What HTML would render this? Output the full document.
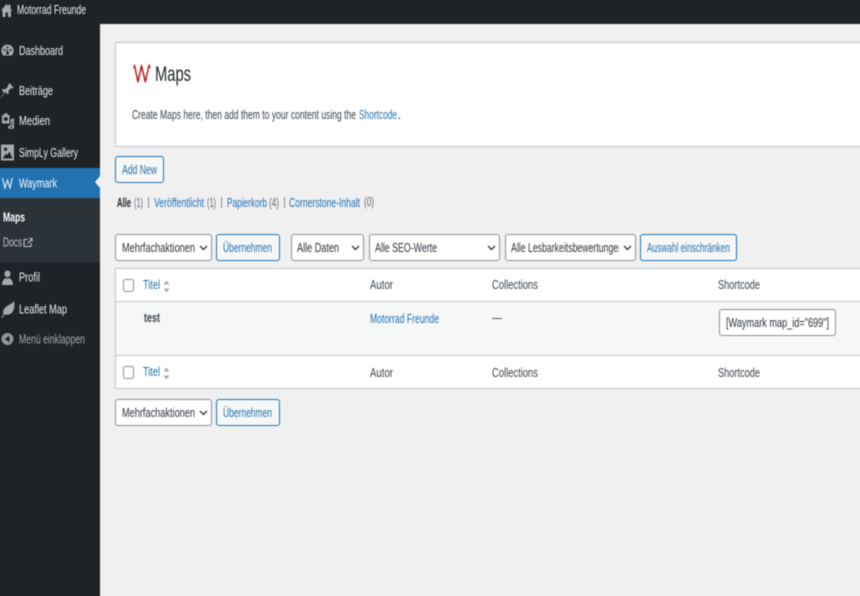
<!DOCTYPE html>
<html><head><meta charset="utf-8"><style>
html,body{margin:0;padding:0;width:860px;height:596px;overflow:hidden;background:#f0f0f1}
#w{position:absolute;left:0;top:0;width:860px;height:596px;overflow:hidden;contain:paint}
svg.r{position:absolute;left:-10px;top:-10px;display:block;filter:blur(.4px)}
text{font-family:"Liberation Sans",sans-serif;font-size:13px;fill:#3c434a}
.l{fill:#2271b1}
.g{fill:#646970}
.b{fill:#2271b1;font-size:12.5px}
.box{fill:#fff;stroke:#8c8f94}
.btn{fill:#f6f7f7;stroke:#2271b1}
.ck{fill:#fff;stroke:#8c8f94}
</style></head><body><div id="w">
<svg class="r" width="880" height="616" viewBox="-10 -10 880 616" xmlns="http://www.w3.org/2000/svg">
<rect x="-10" y="-10" width="880" height="616" fill="#f0f0f1"/>
<rect x="-10" y="-10" width="880" height="34" fill="#1d2327"/>
<rect x="-10" y="-10" width="110" height="616" fill="#1d2327"/>
<rect x="-10" y="168" width="110" height="30" fill="#2271b1"/>
<rect x="-10" y="198" width="110" height="64" fill="#2c3338"/>
<path d="M100 176l-5 6 5 6z" fill="#f0f0f1"/>

<!-- sidebar icons -->
<g fill="#a7aaad">
<path d="M1 10.500L6.500 4l2 2.200V4.500h2V8.500L12.500 10.500H11V17H8v-4.500H5.500V17H2.500v-6.500z"/>
<path fill-rule="evenodd" d="M7.500 44.500a6.200 6.200 0 0 1 5.500 9l-1 2H3l-1-2a6.200 6.200 0 0 1 5.500-9zm0 2a1 1 0 1 0 .1 0zM4.500 49a1 1 0 1 0 .1 0zm6 0a1 1 0 1 0 .1 0zM6.300 54.500h2.400l.3-1-1.200-4h-.6l-1.200 4z"/>
<path d="M9.500 83l4 4.500-1.500 1-1-.3-2.500 2.700.2 2.400-1.200 1-2.300-2.300L1 98l-.3-.3L4 92.500l-2.200-2.300 1.200-1.200 2.400.2L8 86.500l-.2-1z"/>
<path fill-rule="evenodd" d="M2 115h2l.8-1.800h2.400L8 115h1.500v8.500H2zm3.800 2a2 2 0 1 0 .1 0zM10.500 119.500l3.500-1.300v9a1.800 1.800 0 1 1-1.500-1.700v-4.500l-.8.300v5.900a1.800 1.800 0 1 1-1.200-1.700z"/>
<path fill-rule="evenodd" d="M1 144.500h13v16H1zm4.500 3a1.700 1.700 0 1 0 .1 0zM2.800 158.500h9.500l-2.800-7-2.200 3.500-1.500-1.500z"/>
<path d="M4.500 273.500a3 3 0 0 1 6 0c0 2.200-1.300 3.800-3 3.800s-3-1.600-3-3.800zM2 285c0-4 2.200-6.500 4-7l1.500 1 1.500-1c1.800.5 4 3 4 7z"/>
<path d="M14 301c1 5 .3 10-3 12.500-2.300 1.500-5 1.500-6.700 1L2.500 318l-1-.7 2-3.300c-1-2.500.2-5.500 3-7.500 2.300-1.600 5.500-2.500 7.500-5.500z"/>
<path fill-rule="evenodd" d="M7.500 333a6 6 0 1 1-.1 0zm2 2.700L4.800 339l4.700 3.300z" opacity=".85"/>
</g>
<path d="M2.500 178l2.500 10 2.500-8 2.500 8 2.300-10" fill="none" stroke="#e8f0f6" stroke-width="1.100"/>

<!-- sidebar text -->
<text x="17" y="14" textLength="69" lengthAdjust="spacingAndGlyphs" style="fill:#f0f0f1">Motorrad Freunde</text>
<text x="19" y="55" textLength="44" lengthAdjust="spacingAndGlyphs" style="fill:#f0f0f1">Dashboard</text>
<text x="19" y="95" textLength="34" lengthAdjust="spacingAndGlyphs" style="fill:#f0f0f1">Beiträge</text>
<text x="19" y="125" textLength="31" lengthAdjust="spacingAndGlyphs" style="fill:#f0f0f1">Medien</text>
<text x="19" y="157" textLength="59" lengthAdjust="spacingAndGlyphs" style="fill:#f0f0f1">SimpLy Gallery</text>
<text x="19" y="187.500" textLength="38" lengthAdjust="spacingAndGlyphs" style="fill:#fff">Waymark</text>
<text x="3" y="221.500" textLength="22" lengthAdjust="spacingAndGlyphs" style="fill:#fff;font-weight:bold">Maps</text>
<text x="3" y="246.500" textLength="19" lengthAdjust="spacingAndGlyphs" style="fill:#c3c4c7">Docs</text>
<text x="19" y="281.500" textLength="21" lengthAdjust="spacingAndGlyphs" style="fill:#f0f0f1">Profil</text>
<text x="19" y="313.500" textLength="48" lengthAdjust="spacingAndGlyphs" style="fill:#f0f0f1">Leaflet Map</text>
<text x="19" y="343.500" textLength="66" lengthAdjust="spacingAndGlyphs" style="fill:#a7aaad">Menü einklappen</text>
<path d="M27.500 239.500h-3.500v7h7V243M27.500 243.500l4-4M29 238.500h3v3" fill="none" stroke="#c3c4c7" stroke-width="1.100"/>

<!-- header card -->
<rect x="115.500" y="42.500" width="760" height="104" fill="#fff" stroke="#c3c4c7"/>
<path d="M134.500 66l3.500 15 3.500-14.500L145.300 81l3.700-15" fill="none" stroke="#b3201c" stroke-width="1.500"/>
<path d="M133 68l1.500-4.500 1.500 4.500zM139.800 68.500l1.700-4.500 1.700 4.500zM147.500 68l1.800-4.500 1.500 4.500zM136.300 79l1.700 4.500 1.700-4.500zM143.500 79l1.800 4.500 1.700-4.500z" fill="#b3201c"/>
<text x="155" y="81" textLength="36" lengthAdjust="spacingAndGlyphs" style="font-size:21px;fill:#1d2327">Maps</text>
<text x="132" y="119" textLength="224" lengthAdjust="spacingAndGlyphs">Create Maps here, then add them to your content using the</text>
<text class="l" x="359" y="119" textLength="38" lengthAdjust="spacingAndGlyphs">Shortcode</text>
<text x="397.500" y="119">.</text>

<!-- add new -->
<rect class="btn" x="115.500" y="156.500" width="48" height="26" rx="2.500"/>
<text class="b" x="122" y="174" textLength="35" lengthAdjust="spacingAndGlyphs">Add New</text>

<!-- subsubsub -->
<text x="117" y="207" textLength="14" lengthAdjust="spacingAndGlyphs" style="font-weight:bold;fill:#1d2327">Alle</text>
<text class="g" x="134" y="207" textLength="9" lengthAdjust="spacingAndGlyphs">(1)</text>
<rect x="148" y="197" width="1" height="11" fill="#8c8f94"/>
<text class="l" x="154" y="207" textLength="50" lengthAdjust="spacingAndGlyphs">Veröffentlicht</text>
<text class="g" x="207" y="207" textLength="9" lengthAdjust="spacingAndGlyphs">(1)</text>
<rect x="221" y="197" width="1" height="11" fill="#8c8f94"/>
<text class="l" x="227" y="207" textLength="40" lengthAdjust="spacingAndGlyphs">Papierkorb</text>
<text class="g" x="269" y="207" textLength="10" lengthAdjust="spacingAndGlyphs">(4)</text>
<rect x="284" y="197" width="1" height="11" fill="#8c8f94"/>
<text class="l" x="289" y="207" textLength="71" lengthAdjust="spacingAndGlyphs">Cornerstone-Inhalt</text>
<text class="g" x="364" y="206" textLength="10" lengthAdjust="spacingAndGlyphs">(0)</text>

<!-- top filters -->
<rect class="box" x="115.500" y="234.500" width="96" height="26" rx="2.500"/>
<text x="122" y="252" textLength="73" lengthAdjust="spacingAndGlyphs" style="fill:#2c3338">Mehrfachaktionen</text>
<path d="M200 246l3.500 3.500 3.500-3.500" fill="none" stroke="#2c3338" stroke-width="1.300"/>
<rect class="btn" x="216.500" y="234.500" width="63" height="26" rx="2.500"/>
<text class="b" x="223" y="252" textLength="49" lengthAdjust="spacingAndGlyphs">Übernehmen</text>
<rect class="box" x="291.500" y="234.500" width="72" height="26" rx="2.500"/>
<text x="297" y="252" textLength="42" lengthAdjust="spacingAndGlyphs" style="fill:#2c3338">Alle Daten</text>
<path d="M352 246l3.500 3.500 3.500-3.500" fill="none" stroke="#2c3338" stroke-width="1.300"/>
<rect class="box" x="369.500" y="234.500" width="130" height="26" rx="2.500"/>
<text x="375" y="252" textLength="62" lengthAdjust="spacingAndGlyphs" style="fill:#2c3338">Alle SEO-Werte</text>
<path d="M488 246l3.500 3.500 3.500-3.500" fill="none" stroke="#2c3338" stroke-width="1.300"/>
<rect class="box" x="505.500" y="234.500" width="130" height="26" rx="2.500"/>
<svg x="511" y="238" width="108" height="20"><text x="0" y="14" textLength="112" lengthAdjust="spacingAndGlyphs" style="fill:#2c3338">Alle Lesbarkeitsbewertungen</text></svg>
<path d="M624 246l3.500 3.500 3.500-3.500" fill="none" stroke="#2c3338" stroke-width="1.300"/>
<rect class="btn" x="640.500" y="234.500" width="96" height="26" rx="2.500"/>
<text class="b" x="647" y="252" textLength="83" lengthAdjust="spacingAndGlyphs">Auswahl einschränken</text>

<!-- table -->
<rect x="115.500" y="268.500" width="760" height="120" fill="#fff" stroke="#c3c4c7"/>
<rect x="116" y="302" width="754" height="53" fill="#f6f7f7"/>
<rect x="116" y="301" width="754" height="1" fill="#c3c4c7"/>
<rect x="116" y="355" width="754" height="1" fill="#c3c4c7"/>

<rect class="ck" x="123.500" y="279.500" width="10" height="12" rx="2"/>
<text class="l" x="143" y="289" textLength="17" lengthAdjust="spacingAndGlyphs">Titel</text>
<path d="M166.500 280.500l3 4h-6zM166.500 292.500l3-4h-6z" fill="#a7aaad"/>
<text x="370" y="289" textLength="23" lengthAdjust="spacingAndGlyphs">Autor</text>
<text x="492" y="289" textLength="46" lengthAdjust="spacingAndGlyphs">Collections</text>
<text x="718" y="289" textLength="42" lengthAdjust="spacingAndGlyphs">Shortcode</text>

<text x="144" y="322" textLength="16" lengthAdjust="spacingAndGlyphs" style="font-weight:bold;fill:#3c434a">test</text>
<text class="l" x="370" y="323" textLength="69" lengthAdjust="spacingAndGlyphs">Motorrad Freunde</text>
<rect x="492" y="318" width="10" height="1" fill="#50575e"/>
<rect x="719.500" y="309.500" width="116" height="26" rx="2.500" fill="#fff" stroke="#8c8f94"/>
<text x="726" y="327" textLength="103" lengthAdjust="spacingAndGlyphs" style="fill:#2c3338">[Waymark map_id="699"]</text>

<rect class="ck" x="123.500" y="366.500" width="10" height="12" rx="2"/>
<text class="l" x="143" y="376" textLength="17" lengthAdjust="spacingAndGlyphs">Titel</text>
<path d="M166.500 367.500l3 4h-6zM166.500 379.500l3-4h-6z" fill="#a7aaad"/>
<text x="370" y="377" textLength="23" lengthAdjust="spacingAndGlyphs">Autor</text>
<text x="492" y="377" textLength="46" lengthAdjust="spacingAndGlyphs">Collections</text>
<text x="718" y="377" textLength="42" lengthAdjust="spacingAndGlyphs">Shortcode</text>

<!-- bottom actions -->
<rect class="box" x="115.500" y="399.500" width="96" height="26" rx="2.500"/>
<text x="122" y="417" textLength="73" lengthAdjust="spacingAndGlyphs" style="fill:#2c3338">Mehrfachaktionen</text>
<path d="M200 411l3.500 3.500 3.500-3.500" fill="none" stroke="#2c3338" stroke-width="1.300"/>
<rect class="btn" x="216.500" y="399.500" width="63" height="26" rx="2.500"/>
<text class="b" x="223" y="417" textLength="49" lengthAdjust="spacingAndGlyphs">Übernehmen</text>
</svg>
</div></body></html>
